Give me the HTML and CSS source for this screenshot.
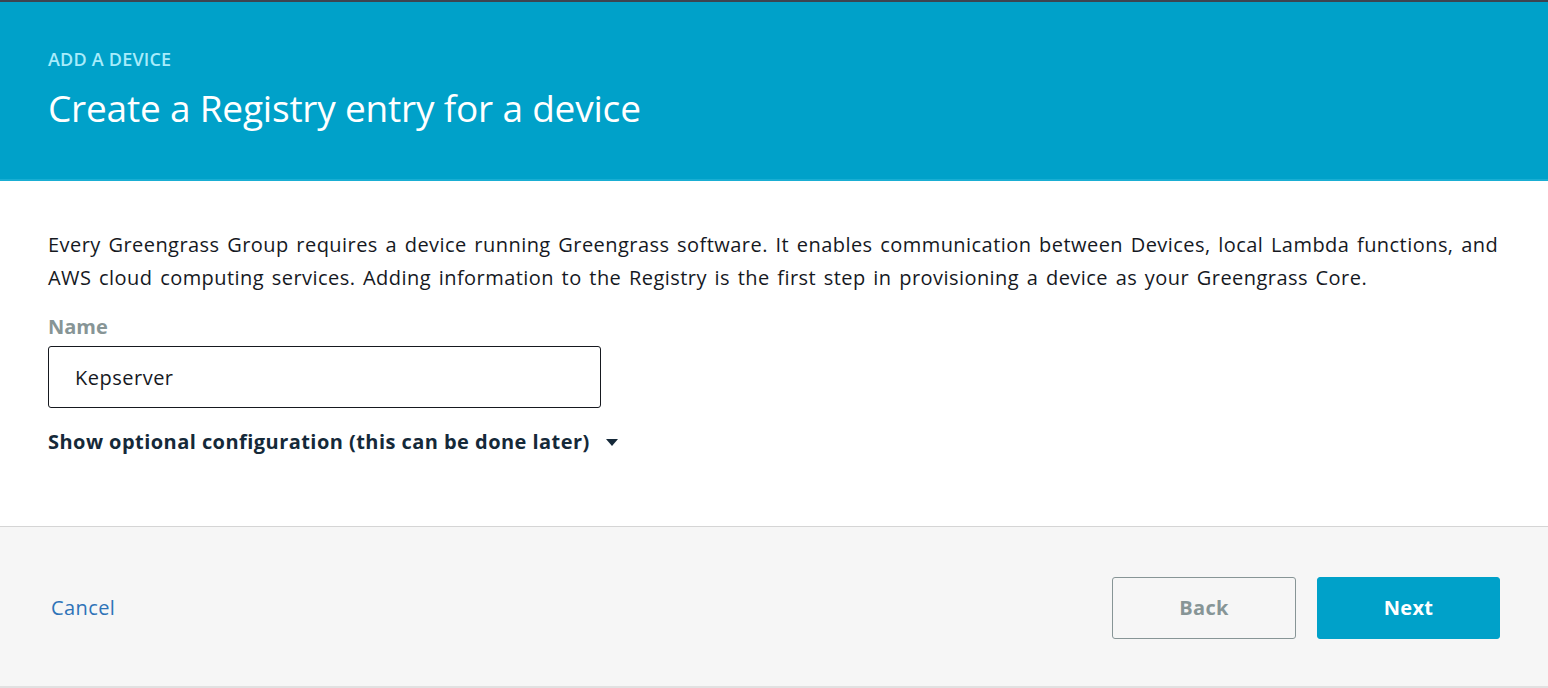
FILE: index.html
```html
<!DOCTYPE html>
<html>
<head>
<meta charset="utf-8">
<link rel="stylesheet" href="styles.css">
</head>
<body>
<div class="page">
  <header class="hero">
    <div class="eyebrow">ADD A DEVICE</div>
    <h1 class="title">Create a Registry entry for a device</h1>
  </header>
  <main class="content">
    <p class="intro">Every Greengrass Group requires a device running Greengrass software. It enables communication between Devices, local Lambda functions, and AWS cloud computing services. Adding information to the Registry is the first step in provisioning a device as your Greengrass Core.</p>
    <label class="field-label">Name</label>
    <div class="input">Kepserver</div>
    <div class="toggle">Show optional configuration (this can be done later)<span class="caret"></span></div>
  </main>
  <footer class="footer">
    <a class="cancel">Cancel</a>
    <div class="actions">
      <button class="btn btn-back">Back</button>
      <button class="btn btn-next">Next</button>
    </div>
  </footer>
</div>
</body>
</html>
```
FILE: styles.css
```css
html, body { margin: 0; padding: 0; }
body { font-family: "Open Sans", "Liberation Sans", sans-serif; background: #fff; width: 1548px; height: 688px; overflow: hidden; }
.page { display: flex; flex-direction: column; height: 688px; }
.hero { background: #00a1c9; border-top: 2px solid #3d4450; border-bottom: 2px solid #19aed3; height: 177px; box-sizing: content-box; padding: 0 48px; }
.eyebrow { color: #a8ecfb; font-size: 18px; line-height: 24px; font-weight: 600; margin-top: 45px; letter-spacing: 0.2px; }
.title { color: #fff; font-size: 37px; line-height: 48px; font-weight: 500; margin: 13px 0 0; letter-spacing: -0.2px; }
.content { padding: 0 48px; height: 346px; box-sizing: border-box; border-bottom: 1px solid #d5d5d5; }
.intro { font-size: 20px; line-height: 33px; color: #16191f; margin: 47px 0 0; letter-spacing: 0.45px; word-spacing: 2px; }
.field-label { display: block; color: #879596; font-weight: 700; font-size: 20px; line-height: 24px; margin-top: 21px; }
.input { width: 525px; height: 60px; border: 1px solid #16191f; border-radius: 3px; margin-top: 7px; padding-left: 26px; display: flex; align-items: center; font-size: 20px; color: #16191f; letter-spacing: 0.5px; }
.toggle { display: flex; align-items: center; font-weight: 700; font-size: 20px; line-height: 26px; color: #152939; margin-top: 21px; letter-spacing: 0.45px; }
.caret { width: 0; height: 0; border-left: 6px solid transparent; border-right: 6px solid transparent; border-top: 7px solid #152939; margin-left: 16px; }
.footer { flex: 1; background: #f6f6f6; border-bottom: 2px solid #e1e1e1; display: flex; align-items: center; justify-content: space-between; padding: 2px 48px 0 51px; }
.cancel { color: #2e73b8; font-size: 20px; letter-spacing: 0.4px; }
.actions { display: flex; gap: 21px; }
.btn { width: 184px; height: 62px; border-radius: 3px; font-family: inherit; font-size: 20px; font-weight: 700; cursor: pointer; letter-spacing: 0.3px; }
.btn-back { background: transparent; border: 1px solid #879596; color: #879596; }
.btn-next { background: #00a1c9; border: 1px solid #00a1c9; color: #fff; width: 183px; }
```
